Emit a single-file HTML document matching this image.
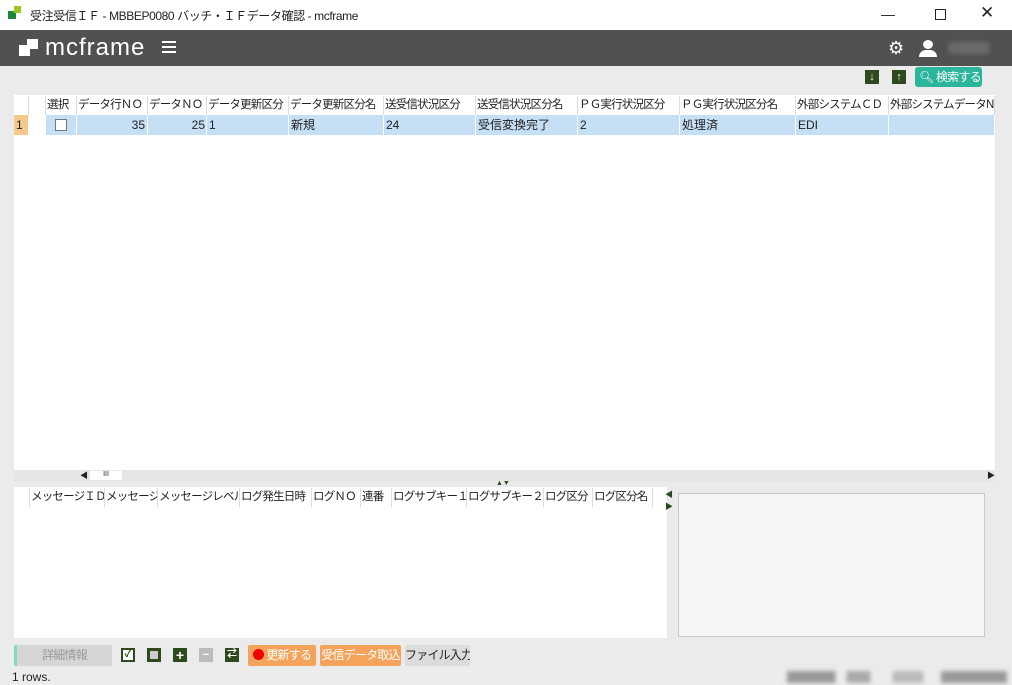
<!DOCTYPE html><html><head><meta charset="utf-8"><style>
*{box-sizing:border-box;margin:0;padding:0}
body{width:1012px;height:685px;overflow:hidden;background:#ebebeb;font-family:"Liberation Sans","Noto Sans CJK JP",sans-serif;font-size:12px;color:#222;position:relative}
.a{position:absolute}
.hd div,.hd2 div{position:absolute;top:0;height:19px;line-height:19px;border-right:1px solid #ddd;padding-left:1px;white-space:nowrap;overflow:hidden;font-size:11.5px;letter-spacing:-0.8px}
.row div{position:absolute;top:0;height:20px;line-height:20px;border-right:1px solid #fff;padding-left:2px;white-space:nowrap}
.ico{position:absolute;width:14px;height:14px;background:#2d4a1e;color:#fff;font-size:11px;line-height:14px;text-align:center;font-weight:bold}
.btn{position:absolute;top:645px;height:21px;line-height:21px;text-align:center;border-radius:2px;font-size:12px;letter-spacing:-0.8px;white-space:nowrap;overflow:hidden}
</style></head><body>
<div class="a" style="left:0;top:0;width:1012px;height:30px;background:#fff"></div>
<div class="a" style="left:8px;top:11px;width:8px;height:8px;background:#1a8a3a"></div>
<div class="a" style="left:14px;top:6px;width:7px;height:7px;background:#9cc820"></div>
<div class="a" style="left:30px;top:7px;font-size:12px;color:#222;letter-spacing:-0.4px">受注受信ＩＦ - MBBEP0080 バッチ・ＩＦデータ確認 - mcframe</div>
<div class="a" style="left:881px;top:6px;font-size:14px">—</div>
<div class="a" style="left:935px;top:9px;width:11px;height:11px;border:1px solid #222"></div>
<div class="a" style="left:980px;top:3px;font-size:17px">✕</div>
<div class="a" style="left:0;top:30px;width:1012px;height:36px;background:#515151"></div>
<div class="a" style="left:19px;top:45px;width:11px;height:11px;background:#fff"></div>
<div class="a" style="left:27px;top:39px;width:11px;height:10px;background:#fff"></div>
<div class="a" style="left:45px;top:34px;font-size:24px;color:#fff;letter-spacing:1px;font-weight:300">mcframe</div>
<div class="a" style="left:162px;top:41px;width:14px;height:2px;background:#fff;box-shadow:0 5px 0 #fff,0 10px 0 #fff;transform:translateY(0)"></div>
<div class="a" style="left:888px;top:38px;font-size:18px;color:#fff">⚙</div>
<div class="a" style="left:923px;top:40px;width:10px;height:9px;border-radius:50%;background:#fff"></div>
<div class="a" style="left:919px;top:50px;width:18px;height:7px;border-radius:8px 8px 0 0;background:#fff"></div>
<div class="a" style="left:948px;top:42px;width:42px;height:12px;background:#6a6a6a;border-radius:5px;filter:blur(2px)"></div>
<div class="ico" style="left:865px;top:70px">↓</div>
<div class="ico" style="left:892px;top:70px">↑</div>
<div class="a" style="left:915px;top:67px;width:67px;height:20px;background:#2bb59a;border-radius:3px;color:#fff;line-height:20px;padding-left:4px;white-space:nowrap;letter-spacing:-0.8px">🔍︎ 検索する</div>
<div class="a" style="left:14px;top:95px;width:981px;height:375px;background:#fff"></div>
<div class="a hd" style="left:14px;top:96px;width:981px;height:19px">
<div style="left:0;width:15px"></div><div style="left:15px;width:17px"></div><div style="left:32px;width:31px">選択</div><div style="left:63px;width:71px">データ行ＮＯ</div><div style="left:134px;width:59px">データＮＯ</div><div style="left:193px;width:82px">データ更新区分</div><div style="left:275px;width:95px">データ更新区分名</div><div style="left:370px;width:92px">送受信状況区分</div><div style="left:462px;width:102px">送受信状況区分名</div><div style="left:564px;width:102px">ＰＧ実行状況区分</div><div style="left:666px;width:116px">ＰＧ実行状況区分名</div><div style="left:782px;width:93px">外部システムＣＤ</div><div style="left:875px;width:106px">外部システムデータN</div></div>
<div class="a row" style="left:14px;top:115px;width:981px;height:20px">
<div style="left:0;width:15px;background:#f5c98a">1</div><div style="left:15px;width:17px;background:#fff"></div><div style="left:32px;width:31px;background:#c5dff5"><span style="display:inline-block;width:12px;height:12px;border:1px solid #777;margin:4px 0 0 7px;background:#fff"></span></div><div style="left:63px;width:71px;background:#c5dff5;text-align:right;padding-right:2px">35</div><div style="left:134px;width:59px;background:#c5dff5;text-align:right;padding-right:1px">25</div><div style="left:193px;width:82px;background:#c5dff5">1</div><div style="left:275px;width:95px;background:#c5dff5">新規</div><div style="left:370px;width:92px;background:#c5dff5">24</div><div style="left:462px;width:102px;background:#c5dff5">受信変換完了</div><div style="left:564px;width:102px;background:#c5dff5">2</div><div style="left:666px;width:116px;background:#c5dff5">処理済</div><div style="left:782px;width:93px;background:#c5dff5">EDI</div><div style="left:875px;width:106px;background:#c5dff5"></div></div>
<div class="a" style="left:14px;top:470px;width:981px;height:12px;background:#e6e6e6"></div>
<div class="a" style="left:80px;top:470px;font-size:8px">◀</div>
<div class="a" style="left:90px;top:471px;width:32px;height:9px;background:#fff;font-size:7px;text-align:center">III</div>
<div class="a" style="left:987px;top:470px;font-size:8px">▶</div>
<div class="a" style="left:496px;top:480px;font-size:7px;color:#2d4a1e">▲▼</div>
<div class="a" style="left:14px;top:487px;width:653px;height:151px;background:#fff"></div>
<div class="a hd2" style="left:14px;top:488px;width:653px;height:19px">
<div style="left:0;width:16px"></div><div style="left:16px;width:75px">メッセージＩＤ</div><div style="left:91px;width:53px">メッセージ</div><div style="left:144px;width:82px">メッセージレベル</div><div style="left:226px;width:72px">ログ発生日時</div><div style="left:298px;width:49px">ログＮＯ</div><div style="left:347px;width:31px">連番</div><div style="left:378px;width:75px">ログサブキー１</div><div style="left:453px;width:77px">ログサブキー２</div><div style="left:530px;width:49px">ログ区分</div><div style="left:579px;width:60px">ログ区分名</div></div>
<div class="a" style="left:665px;top:489px;font-size:8px;color:#2d4a1e;line-height:12px">◀<br>▶</div>
<div class="a" style="left:678px;top:493px;width:307px;height:144px;background:#f5f5f5;border:1px solid #c8c8c8"></div>
<div class="btn" style="left:14px;width:98px;background:#d6d6d6;border-left:3px solid #7fd8c8;color:#999">詳細情報</div>
<div class="ico" style="left:121px;top:648px;background:#fff;border:2px solid #2d4a1e;color:#2d4a1e;font-size:10px;line-height:10px">✓</div>
<div class="ico" style="left:147px;top:648px;background:#2d4a1e;border:2px solid #2d4a1e"><div style="margin:1px;width:8px;height:8px;background:#ccc"></div></div>
<div class="ico" style="left:173px;top:648px;font-size:14px">+</div>
<div class="ico" style="left:199px;top:648px;background:#bbb">−</div>
<div class="ico" style="left:225px;top:648px;font-size:10px">⇄</div>
<div class="btn" style="left:248px;width:68px;background:#f4a45a;color:#fff"><span style="display:inline-block;width:11px;height:11px;border-radius:50%;background:#e00;vertical-align:-1px"></span> 更新する</div>
<div class="btn" style="left:320px;width:81px;background:#f4a45a;color:#fff">受信データ取込</div>
<div class="btn" style="left:405px;width:65px;background:#dcdcdc;color:#222">ファイル入力</div>
<div class="a" style="left:0;top:668px;width:1012px;height:17px;background:#ececec"></div>
<div class="a" style="left:12px;top:670px;font-size:12px">1 rows.</div>
<div class="a" style="left:787px;top:671px;width:220px;height:12px;background:linear-gradient(90deg,#999 0 22%,transparent 22% 27%,#aaa 27% 38%,transparent 38% 48%,#bbb 48% 62%,transparent 62% 70%,#999 70%);filter:blur(2px)"></div>
</body></html>
